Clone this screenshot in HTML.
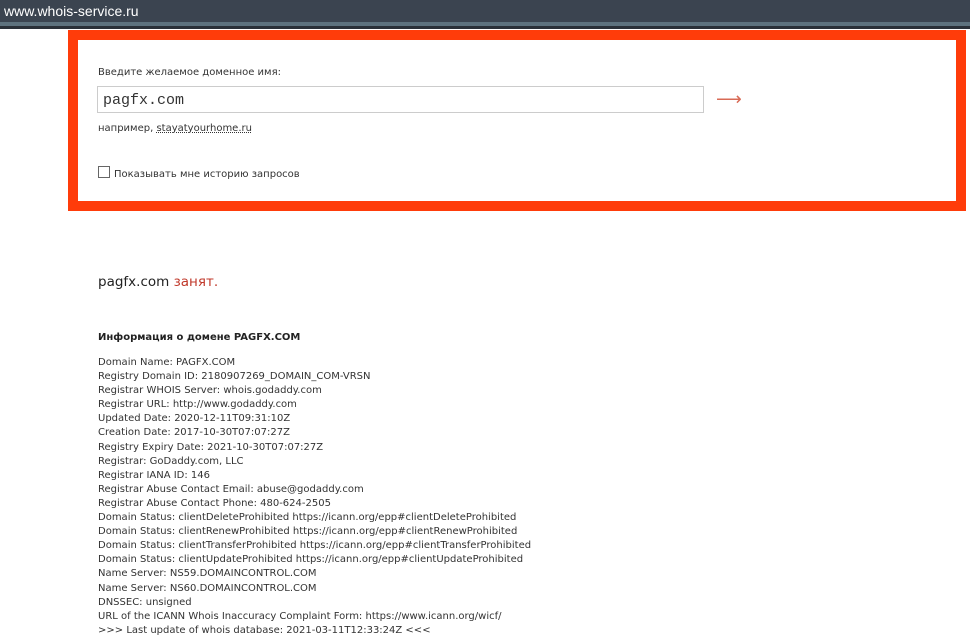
<!DOCTYPE html>
<html><head><meta charset="utf-8"><style>
body{margin:0;width:970px;height:641px;background:#fff;font-family:"DejaVu Sans","Liberation Sans",sans-serif;position:relative;overflow:hidden;color:#222}
.bar{position:absolute;left:0;top:0;width:970px;height:22px;background:#3b4450}
.bar2{position:absolute;left:0;top:22px;width:970px;height:4px;background:#5e727e}
.bar3{position:absolute;left:0;top:26px;width:970px;height:3px;background:#2a3038}
.url{position:absolute;left:4px;top:3px;color:#fff;font:14px "Liberation Sans",sans-serif}
.frame{position:absolute;left:68px;top:30px;width:878px;height:161px;border:10px solid #ff3c0a}
.abs{position:absolute;white-space:nowrap}
.s{font-size:10px;color:#333}
.inp{position:absolute;left:97px;top:86px;width:607px;height:27px;border:1px solid #ccc;box-sizing:border-box}
.mono{font:15px "Liberation Mono",monospace;color:#333}
pre{position:absolute;left:98px;top:356px;margin:0;font:10px/14.1px "DejaVu Sans",sans-serif;color:#333}
</style></head><body>
<div class="bar"></div><div class="bar2"></div><div class="bar3"></div>
<div class="url">www.whois-service.ru</div>
<div class="frame"></div>
<div class="abs s" style="left:98px;top:67px">Введите желаемое доменное имя:</div>
<div class="inp"></div>
<div class="abs mono" style="left:103px;top:92px">pagfx.com</div>
<div class="abs" style="left:716px;top:89px;color:#d86a55;font-size:18px">⟶</div>
<div class="abs s" style="left:98px;top:123px">например, <span style="text-decoration:underline dotted">stayatyourhome.ru</span></div>
<div class="abs" style="left:98px;top:166px;width:12px;height:12px;border:1px solid #666;box-sizing:border-box"></div>
<div class="abs s" style="left:114px;top:169px">Показывать мне историю запросов</div>
<div class="abs" style="left:98px;top:274px;font-size:13.5px;color:#222">pagfx.com <span style="color:#c0392b">занят.</span></div>
<div class="abs" style="left:98px;top:332px;font-size:10px;font-weight:bold;color:#222">Информация о домене PAGFX.COM</div>
<pre>Domain Name: PAGFX.COM
Registry Domain ID: 2180907269_DOMAIN_COM-VRSN
Registrar WHOIS Server: whois.godaddy.com
Registrar URL: http://www.godaddy.com
Updated Date: 2020-12-11T09:31:10Z
Creation Date: 2017-10-30T07:07:27Z
Registry Expiry Date: 2021-10-30T07:07:27Z
Registrar: GoDaddy.com, LLC
Registrar IANA ID: 146
Registrar Abuse Contact Email: abuse@godaddy.com
Registrar Abuse Contact Phone: 480-624-2505
Domain Status: clientDeleteProhibited https://icann.org/epp#clientDeleteProhibited
Domain Status: clientRenewProhibited https://icann.org/epp#clientRenewProhibited
Domain Status: clientTransferProhibited https://icann.org/epp#clientTransferProhibited
Domain Status: clientUpdateProhibited https://icann.org/epp#clientUpdateProhibited
Name Server: NS59.DOMAINCONTROL.COM
Name Server: NS60.DOMAINCONTROL.COM
DNSSEC: unsigned
URL of the ICANN Whois Inaccuracy Complaint Form: https://www.icann.org/wicf/
>>> Last update of whois database: 2021-03-11T12:33:24Z <<<</pre>
</body></html>
